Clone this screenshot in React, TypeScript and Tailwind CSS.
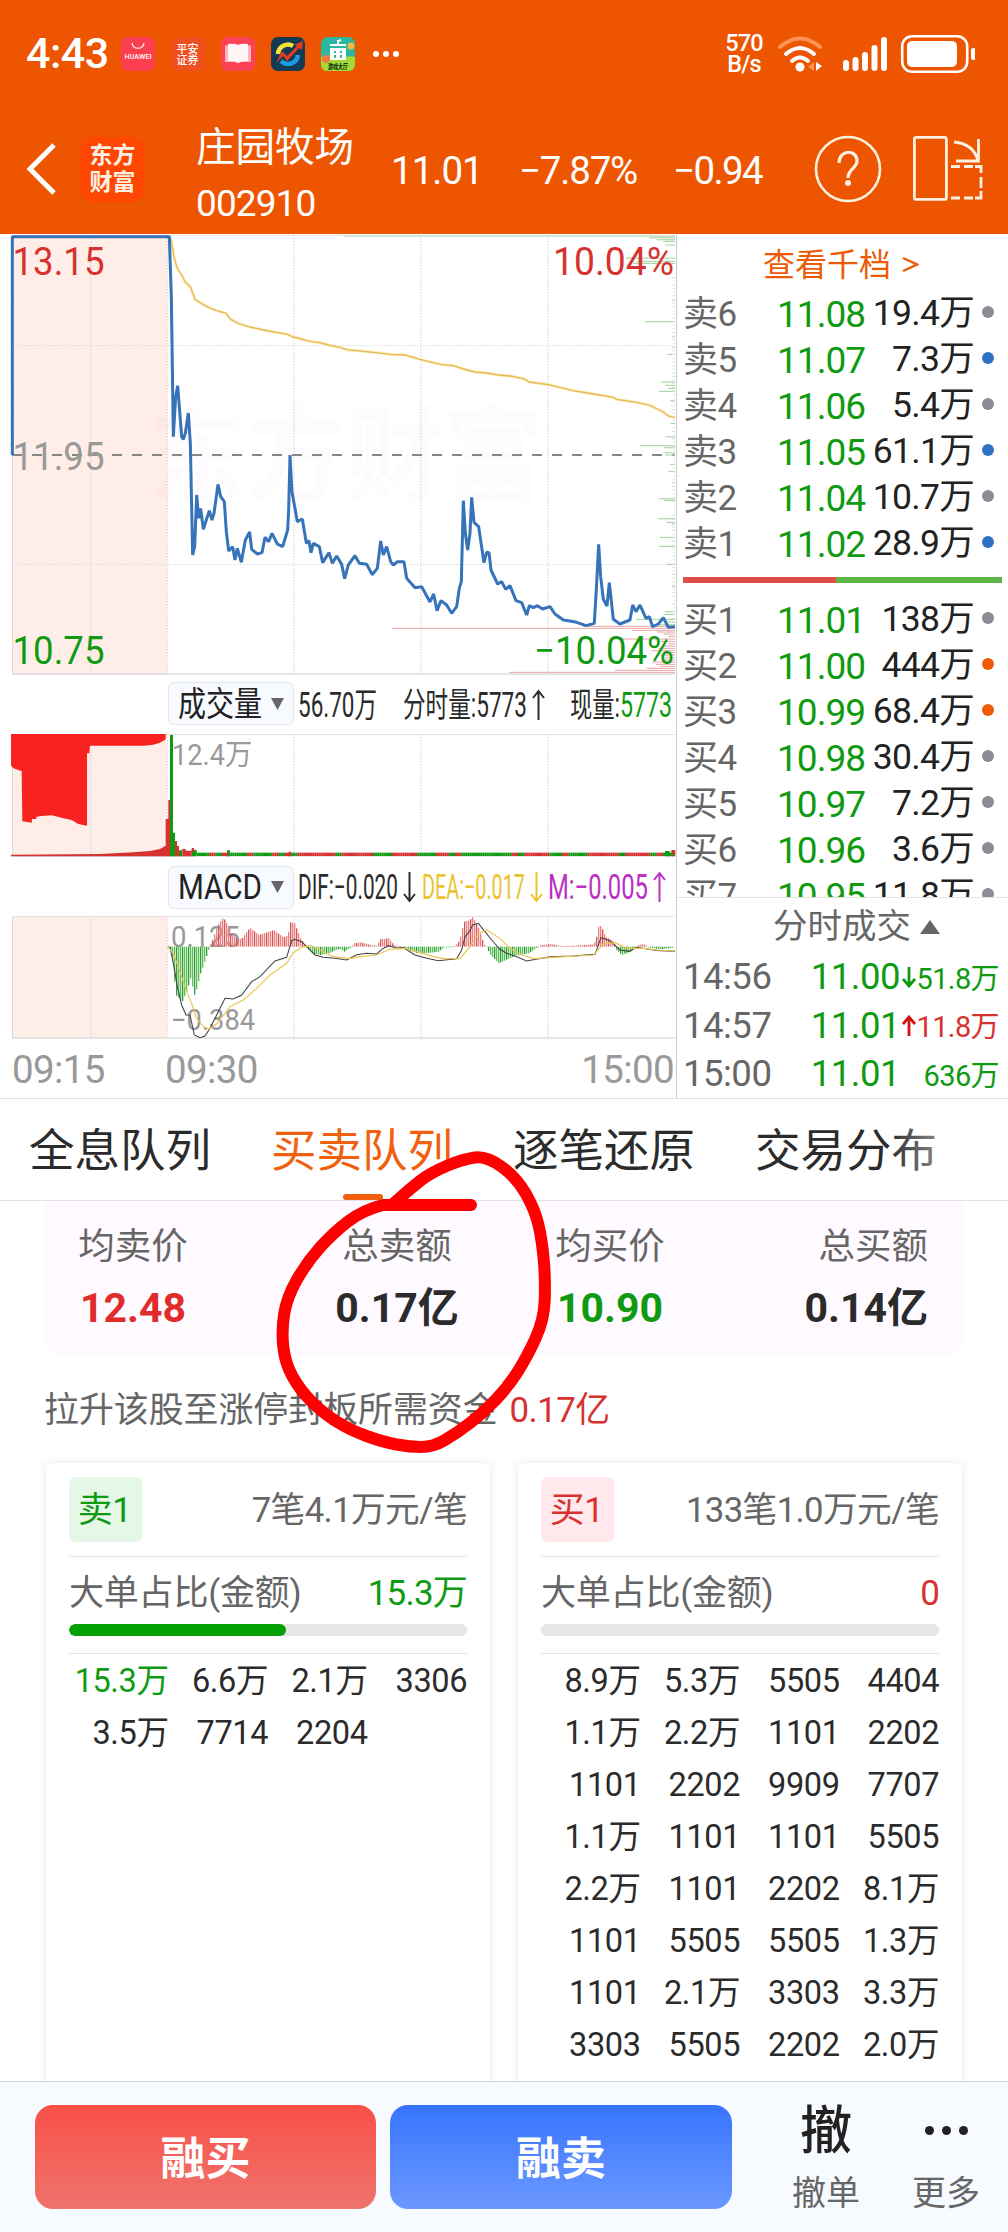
import React from "react";

const GREEN = "#0f9a12";
const RED = "#d7322f";

type Pt = [number, number];
const line = (p: Pt[]) => p.map(([x, y]) => `${x},${y}`).join(" ");
const shift = (p: Pt[]): Pt[] => p.map(([x, y]) => [x + 1020, y]);

/* Chart series are stored at triple resolution and drawn inside a 1/3 scale group. */
const price: Pt[] = [
  [37, 675], [37, 20], [508, 20], [514, 200], [520, 620], [527, 500], [533, 467], [545, 620], [550, 628], [556, 610], [565, 549],
  [571, 640], [578, 975], [584, 950], [590, 795], [596, 865], [602, 835], [610, 898], [628, 842], [636, 870], [642, 850], [654, 763],
  [662, 800], [673, 815], [679, 905], [686, 963], [698, 950], [705, 990], [712, 955], [724, 997], [736, 930], [749, 906], [755, 958],
  [772, 972], [786, 968], [795, 922], [806, 935], [816, 910], [832, 942], [848, 950], [863, 900], [866, 840], [870, 675], [876, 785],
  [892, 875], [907, 867], [919, 940], [927, 932], [933, 968], [940, 940], [958, 950], [968, 998], [987, 968], [997, 1000], [1010, 978],
  [1025, 1003],
  ...shift([
    [14, 1046], [25, 1005], [45, 977], [58, 1000], [80, 1003], [97, 1034], [112, 1015], [122, 933], [130, 975], [140, 950], [152, 995],
    [160, 1005], [172, 995], [192, 995], [200, 1045], [225, 1073], [245, 1070], [270, 1116], [281, 1092], [291, 1142], [303, 1112],
    [320, 1125], [335, 1150], [350, 1130], [358, 1075], [364, 1055], [370, 812], [376, 910], [383, 960], [390, 910], [395, 802],
    [402, 877], [416, 890], [432, 998], [440, 967], [447, 968], [453, 1020], [473, 1062], [485, 1055], [497, 1078], [510, 1067],
    [528, 1112], [545, 1118], [560, 1155], [568, 1127], [580, 1133], [592, 1127], [608, 1137], [630, 1130], [645, 1152], [670, 1170],
    [690, 1173], [710, 1177], [738, 1187], [763, 1180], [770, 1060], [776, 943], [782, 1040], [790, 1108], [801, 1128], [808, 1058],
    [820, 1168], [840, 1182], [870, 1170], [878, 1125], [888, 1145], [900, 1125], [918, 1165], [928, 1160], [938, 1190], [955, 1182],
    [970, 1163], [985, 1192], [1005, 1190],
  ]),
];

const average: Pt[] = [
  [510, 20], [516, 45], [523, 85], [532, 115], [545, 135], [555, 155], [572, 172], [585, 208], [600, 218], [625, 232], [650, 242],
  [678, 250], [692, 268], [715, 280], [745, 290], [790, 300], [863, 313], [880, 321], [935, 335], [960, 338], [985, 345], [1020, 352],
  ...shift([
    [20, 359], [100, 367], [150, 373], [195, 375], [240, 388], [300, 403], [340, 407], [370, 417], [405, 426], [440, 429], [475, 435],
    [510, 438], [550, 446], [568, 456], [625, 464], [700, 482], [760, 492], [820, 502], [830, 508], [890, 517], [930, 526], [970, 546],
    [985, 558], [1005, 563],
  ]),
];

const asks: Pt[] = [
  [23, 927], [29, 950], [34, 970], [45, 975], [84, 858], [94, 890], [100, 880], [210, 995], [275, 916], [320, 995], [352, 995],
  [373, 982], [456, 963], [466, 975], [475, 985], [484, 957], [512, 990], [580, 992], [620, 977], [647, 900], [653, 973], [668, 973],
  [675, 975], [703, 990], [724, 985], [757, 995], [806, 958], [811, 972], [866, 955], [877, 980], [882, 995], [922, 960], [949, 957],
  [1003, 980], [1070, 996], [1145, 975], [1153, 970], [1168, 888], [1176, 975], [1184, 960],
];
const bids: Pt[] = [
  [1195, 155], [1189, 730], [1201, 875], [1206, 950], [1212, 970], [1219, 985], [1227, 845], [1234, 960], [1241, 985], [1248, 970],
  [1255, 955], [1262, 935], [1268, 970], [1275, 960], [1283, 975], [1290, 965], [1296, 935], [1303, 947], [1309, 960], [1315, 920],
  [1321, 825], [1327, 507],
];

const hist: Pt[] = [
  [508, 835], [514, 855], [526, 975], [545, 995], [560, 960], [570, 925], [583, 978], [600, 910], [620, 852], [627, 830], [634, 815],
  [650, 770], [665, 745], [675, 750], [690, 790], [712, 808], [725, 805], [748, 773], [775, 795], [820, 780], [850, 803], [862, 795],
  [870, 757], [882, 760], [900, 805], [918, 830], [925, 840], [940, 852], [960, 855], [985, 850], [1010, 838],
  ...shift([
    [0, 838], [12, 845], [34, 830], [40, 820], [60, 817], [95, 826], [110, 828], [118, 808], [145, 805], [160, 825], [180, 829],
    [205, 840], [230, 850], [270, 848], [295, 845], [310, 832], [340, 829], [352, 820], [362, 795], [370, 755], [385, 752], [397, 741],
    [415, 775], [430, 822], [438, 832], [450, 855], [475, 880], [500, 868], [530, 855], [565, 850], [590, 832], [600, 826], [630, 822],
    [660, 828], [700, 827], [760, 823], [768, 800], [775, 765], [783, 770], [795, 800], [820, 815], [826, 840], [845, 855], [870, 845],
    [885, 832], [895, 825], [905, 822], [920, 828], [930, 833], [960, 838], [1005, 832],
  ]),
];

const dif: Pt[] = [
  [503, 830], [510, 832], [520, 880], [532, 950], [545, 1005], [558, 1035], [570, 1035], [583, 1095], [600, 1103], [615, 1098],
  [630, 1075], [650, 1035], [675, 985], [700, 987], [725, 975], [755, 935], [780, 920], [825, 873], [860, 862], [875, 812], [885, 808],
  [905, 815], [925, 835], [945, 855], [970, 862], [1005, 865],
  ...shift([
    [20, 870], [50, 854], [80, 850], [110, 852], [125, 838], [145, 827], [170, 834], [190, 833], [225, 855], [260, 865], [295, 872],
    [350, 866], [365, 840], [375, 800], [388, 785], [398, 765], [415, 760], [435, 785], [455, 810], [480, 838], [500, 850], [530, 860],
    [560, 873], [630, 860], [700, 858], [765, 853], [783, 803], [810, 812], [840, 840], [868, 844], [890, 832], [940, 840], [960, 842],
    [1005, 844],
  ]),
];
const dea: Pt[] = [
  [503, 830], [520, 850], [540, 905], [560, 965], [575, 1000], [590, 1045], [610, 1070], [625, 1078], [650, 1062], [690, 1010],
  [730, 990], [770, 955], [810, 915], [860, 880], [880, 848], [905, 832], [930, 826], [960, 840], [1000, 860],
  ...shift([
    [30, 866], [60, 860], [110, 855], [150, 838], [195, 835], [240, 848], [280, 860], [310, 866], [360, 866], [390, 830], [415, 790],
    [440, 780], [480, 805], [510, 835], [540, 853], [580, 866], [640, 862], [760, 855], [790, 822], [825, 818], [860, 835], [910, 835],
    [950, 840], [1005, 843],
  ]),
];

const inkPoints: Pt[] = [
  [383, 1205], [363, 1210], [333, 1233], [307, 1262], [287, 1297], [281.5, 1330], [285, 1363], [300, 1390], [323, 1413], [350, 1430],
  [383, 1442], [410, 1447], [433, 1447], [457, 1433], [483, 1413], [508, 1387], [527, 1357], [544, 1320], [545.5, 1280], [542, 1240],
  [535, 1210], [517, 1178], [487, 1156], [463, 1159], [430, 1173], [410, 1189], [393, 1204],
];

function smooth(p: Pt[]) {
  let d = "";
  for (let i = 1; i < p.length - 1; i++) {
    const [x, y] = p[i];
    const [nx, ny] = p[i + 1];
    d += `Q${x} ${y} ${(x + nx) / 2} ${(y + ny) / 2}`;
  }
  const [lx, ly] = p[p.length - 1];
  return `M471 1205L${p[0][0]} ${p[0][1]}${d}L${lx} ${ly}`;
}

function valueAt(p: Pt[], x: number) {
  for (let i = 1; i < p.length; i++) {
    if (x <= p[i][0]) {
      const [x0, y0] = p[i - 1];
      const [x1, y1] = p[i];
      return y0 + ((y1 - y0) * (x - x0)) / (x1 - x0);
    }
  }
  return p[p.length - 1][1];
}

const histXs = Array.from({ length: 252 }, (_, i) => 510 + i * 6);
const volXs = Array.from({ length: 227 }, (_, i) => 590 + i * 6.3);
const noise = (i: number) => Math.abs(Math.sin(i * 12.9898) * 43758.5453) % 1;

function Grid({ top, bottom }: { top: number; bottom: number }) {
  return (
    <g>
      <rect x="12" y={top} width="155" height={bottom - top} fill="#ffeee7" />
      {[91, 167.5, 294, 421, 548].map((x) => (
        <line key={x} x1={x} x2={x} y1={top} y2={bottom} stroke="#dcd9dc" strokeWidth="1.3" strokeDasharray="1.5 1.5" />
      ))}
      <line x1="12.5" x2="12.5" y1={top} y2={bottom} stroke="#dadada" />
      <line x1="12" x2="675" y1={top + 0.5} y2={top + 0.5} stroke="#e2e2e2" />
      <line x1="12" x2="675" y1={bottom} y2={bottom} stroke="#dcdcdc" strokeWidth="1.5" />
    </g>
  );
}

function Label(p: { x: number; y: number; w: number; size: number; fill: string; children: string }) {
  return (
    <text x={p.x} y={p.y} fontSize={p.size} fill={p.fill} textLength={p.w} lengthAdjust="spacingAndGlyphs">
      {p.children}
    </text>
  );
}

function PriceChart() {
  return (
    <svg className="block" width="676" height="442" viewBox="0 235 676 442">
      <Grid top={235} bottom={674} />
      <g fill="#b450c8" fillOpacity="0.025" fontWeight="700" fontSize="104">
        <text x="148" y="494" textLength="394" lengthAdjust="spacingAndGlyphs">东方财富</text>
      </g>
      <g stroke="#dcdcdc" strokeDasharray="1.5 1.5">
        <line x1="12" x2="675" y1="345.5" y2="345.5" />
        <line x1="12" x2="675" y1="564.5" y2="564.5" />
      </g>
      <line x1="12" x2="675" y1="455" y2="455" stroke="#858585" strokeWidth="1.8" strokeDasharray="10 10" />
      <rect x="344" y="235" width="331" height="2" fill="#d3e4cf" />
      <g transform="translate(0 230) scale(0.33333)">
        {asks.map(([y, x]) => (
          <rect key={y} x={x + 1020} y={y - 1.5} width={1005 - x} height="3.4" fill="#a9d6a9" />
        ))}
        {Array.from({ length: 95 }, (_, i) => (
          <rect key={i} x={2025 - 3 - noise(i) * 8} y={130 + i * 11} width={3 + noise(i) * 8} height="3" fill="#cde6cd" />
        ))}
        {bids.map(([y, x]) => (
          <rect key={y} x={x + 1020} y={y - 1.5} width={1005 - x} height="3.2" fill="#e9abab" />
        ))}
        <polyline points={line(average)} fill="none" stroke="#fbeeb9" strokeWidth="9" />
        <polyline points={line(average)} fill="none" stroke="#e8b95a" strokeWidth="4" />
        <polyline points={line(price)} fill="none" stroke="#3673b8" strokeWidth="9" strokeLinejoin="bevel" />
      </g>
      <Label x={12.5} y={275} w={92} size={39} fill={RED}>13.15</Label>
      <Label x={12.5} y={470} w={92} size={39} fill="#999999">11.95</Label>
      <Label x={12.5} y={664} w={92} size={39} fill={GREEN}>10.75</Label>
      <Label x={553} y={275} w={121} size={39} fill={RED}>10.04%</Label>
      <Label x={534} y={664} w={140} size={39} fill={GREEN}>−10.04%</Label>
    </svg>
  );
}

function VolumeChart() {
  return (
    <svg className="block" width="676" height="126" viewBox="0 733 676 126">
      <Grid top={734} bottom={856} />
      <g transform="translate(0 670) scale(0.33333)">
        <path
          fill="#f82221"
          d="M33 192H497V208L490 212L480 218L460 224L430 227H270L268 250H261V467L235 462L215 450L190 445L155 436L125 438L110 440L108 447H96L95 458L67 454L65 303L55 300L40 295L33 287Z"
        />
        <path fill={RED} d="M33 559V554L300 552L400 547L450 543L480 537L497 527V447H505V390H510V559Z" />
        <rect x="510" y="195" width="9" height="364" fill={GREEN} />
        <path fill={GREEN} d="M519 559V488H525V559ZM537 559V541H547V559ZM575 559V540H590V559ZM681 559V541H690V559ZM1995 559V543H2009V559Z" />
        <path fill={RED} d="M525 559V513H531V528H537V559ZM547 559V537H557V542H575V534H582V545H575V559ZM866 559V545H874V559ZM2014 559V540H2026V559Z" />
        {volXs.map((x, i) => (
          <rect key={i} x={x} y="548" width="6.5" height="10" fill={noise(Math.floor(i / 3) + 4) > 0.52 ? RED : GREEN} />
        ))}
      </g>
      <Label x={172} y={765} w={80} size={29} fill="#999999">12.4万</Label>
    </svg>
  );
}

function MacdChart() {
  return (
    <svg className="block" width="676" height="125" viewBox="0 915 676 125">
      <Grid top={916} bottom={1038} />
      <Label x={171} y={947} w={69} size={29} fill="#999999">0.125</Label>
      <Label x={171} y={1030} w={84} size={29} fill="#999999">−0.384</Label>
      <g transform="translate(0 670) scale(0.33333)">
        {histXs.map((x, i) => {
          const y = valueAt(hist, x);
          const up = y < 830;
          return (
            <rect
              key={x}
              x={x}
              y={up ? y : 830}
              width="4"
              height={Math.max(2, Math.abs(y - 830))}
              fill={up ? (i % 3 ? "#ee8181" : "#cf5858") : i % 3 ? "#5cbf5c" : "#2f9e33"}
            />
          );
        })}
        <polyline points={line(dif)} fill="none" stroke="#444" strokeWidth="3.2" />
        <polyline points={line(dea)} fill="none" stroke="#ecc54e" strokeWidth="3.4" />
      </g>
    </svg>
  );
}

function Squeezed({ w, color, children }: { w: number; color?: string; children: string }) {
  return (
    <svg className="block overflow-visible" width={w} height="40" viewBox={`0 0 ${w} 40`}>
      <text x="0" y="32" fontSize="34.5" fill={color ?? "#2b2b2b"} textLength={w} lengthAdjust="spacingAndGlyphs">{children}</text>
    </svg>
  );
}

function Pill({ children }: { children: string }) {
  return (
    <div className="ml-[168px] flex h-[43px] w-[126px] shrink-0 items-center justify-between rounded-md border border-[#e6e7ee] bg-[#f7faff] pr-[9px] pl-[9px]">
      <Squeezed w={84} color="#222222">{children}</Squeezed>
      <svg width="13" height="12" viewBox="0 0 13 12"><path d="M0 0H13L6.5 12Z" fill="#666" /></svg>
    </div>
  );
}

function ThinArrow({ up, color }: { up?: boolean; color: string }) {
  return (
    <svg className="block" width="13" height="32" viewBox="0 0 13 32" fill="none" stroke={color} strokeWidth="2">
      <path d={up ? "M6.5 31V2M1 9L6.5 2L12 9" : "M6.5 1V30M1 23L6.5 30L12 23"} />
    </svg>
  );
}

const GRAY_DOT = "bg-[#8c8c94]";
const BLUE_DOT = "bg-[#2f72c4]";
const ORANGE_DOT = "bg-[#ee5a05]";
const sellRows = [
  ["卖6", "11.08", "19.4万", GRAY_DOT], ["卖5", "11.07", "7.3万", BLUE_DOT], ["卖4", "11.06", "5.4万", GRAY_DOT],
  ["卖3", "11.05", "61.1万", BLUE_DOT], ["卖2", "11.04", "10.7万", GRAY_DOT], ["卖1", "11.02", "28.9万", BLUE_DOT],
];
const buyRows = [
  ["买1", "11.01", "138万", GRAY_DOT], ["买2", "11.00", "444万", ORANGE_DOT], ["买3", "10.99", "68.4万", ORANGE_DOT],
  ["买4", "10.98", "30.4万", GRAY_DOT], ["买5", "10.97", "7.2万", GRAY_DOT], ["买6", "10.96", "3.6万", GRAY_DOT],
  ["买7", "10.95", "11.8万", GRAY_DOT],
];

function BookRow({ row }: { row: string[] }) {
  return (
    <div className="flex h-[46px] shrink-0 items-center pt-[2px] text-[37px] leading-none tracking-[-1px]">
      <span className="w-[70px] text-[35px] tracking-[-0.5px] text-[#666]">{row[0]}</span>
      <span className="w-[112px] text-right text-[#0f9a12]">{row[1]}</span>
      <span className="w-[109px] text-right text-[35.5px] tracking-[-0.7px] whitespace-nowrap text-[#222]">{row[2]}</span>
      <span className={`ml-[8px] size-3 -translate-y-[2px] rounded-full ${row[3]}`} />
    </div>
  );
}

function TradeRow({ time, p, vol, dir }: { time: string; p: string; vol: string; dir?: "up" | "down" }) {
  return (
    <div className="flex h-[48.5px] items-center text-[36.5px] leading-none tracking-[-0.5px]">
      <span className="w-[88px] text-[#666]">{time}</span>
      <span className="w-[129px] text-right text-[#0f9a12]">{p}</span>
      <span className="flex w-[16px] justify-end">
        {dir && (
          <svg width="14" height="22" viewBox="0 0 14 22" fill="none" stroke={dir === "up" ? "#d80f10" : GREEN} strokeWidth="2.8">
            <path d={dir === "up" ? "M7 21V2M1 9L7 2L13 9" : "M7 1V20M1 13L7 20L13 13"} />
          </svg>
        )}
      </span>
      <span className={`w-[83px] pt-1 text-right text-[29px] tracking-[-0.6px] whitespace-nowrap ${dir === "up" ? "text-[#d7322f]" : "text-[#0f9a12]"}`}>
        {vol}
      </span>
    </div>
  );
}

function StatusBar() {
  return (
    <div className="flex h-[104px] items-center pt-[3px] pl-[26px] text-white">
      <span className="w-[95px] text-[43px] leading-none font-medium tracking-[-0.5px]">4:43</span>
      <div className="flex gap-[16px]">
        <svg width="34" height="34" viewBox="0 0 34 34">
          <rect width="34" height="34" rx="7" fill="#fb3f50" />
          <path d="M11 6C12 13 22 13 23 6" fill="none" stroke="#fff" strokeWidth="1.2" />
          <text x="3.5" y="22" fontSize="7" fill="#fff" textLength="27" fontWeight="500">HUAWEI</text>
        </svg>
        <svg width="34" height="34" viewBox="0 0 34 34">
          <rect width="34" height="34" rx="7" fill="#f0501f" />
          <text x="5.5" y="16" fontSize="11" fill="#fff" fontWeight="500">平安</text>
          <text x="5.5" y="26.5" fontSize="11" fill="#fff" fontWeight="500">证券</text>
        </svg>
        <svg width="34" height="34" viewBox="0 0 34 34">
          <rect width="34" height="34" rx="7" fill="#fb4257" />
          <path d="M4 9L7 8Q13 6 17 8Q21 6 27 8L30 9V25L27 25Q20 24 17 26Q14 24 7 25L4 25Z" fill="#ffb3b9" />
          <path d="M7 7Q13 6 17 8Q21 6 27 7V24Q20 24 17 26Q14 24 7 24Z" fill="#fff4f6" />
        </svg>
        <svg width="34" height="34" viewBox="0 0 34 34">
          <rect width="34" height="34" rx="7" fill="#133a55" />
          <path d="M7 17A10 10 0 0 1 22 9" fill="none" stroke="#f2e33a" strokeWidth="4.5" />
          <path d="M27 18A10 10 0 0 1 10 24" fill="none" stroke="#1e9be2" strokeWidth="4.5" />
          <path d="M5 26L11 14L16 19L26 9L23 8L32 4L31 13L28 11L16 24L12 19Z" fill="#e23b22" />
        </svg>
        <svg width="34" height="34" viewBox="0 0 34 34">
          <rect width="34" height="34" rx="7" fill="#2cb8a0" />
          <path d="M0 20Q8 16 17 22Q26 18 34 20V27Q34 34 27 34H7Q0 34 0 27Z" fill="#a3d93a" />
          <circle cx="30" cy="9" r="3.5" fill="#f1b73c" /><circle cx="5" cy="22" r="4" fill="#ef7a45" />
          <path d="M9 8H25M17 8V3M17 4L20 3" stroke="#fff" strokeWidth="2" fill="none" />
          <path d="M9 11H25V23H9ZM13 14V16H15V14ZM19 14V16H21V14ZM13 18V21H15V18ZM19 18V21H21V18Z" fill="#fff" fillRule="evenodd" />
          <text x="7" y="32" fontSize="6.5" fill="#143b10" fontWeight="900" textLength="20" lengthAdjust="spacingAndGlyphs">游戏大厅</text>
        </svg>
      </div>
      <div className="ml-[18px] flex gap-[4px]">
        <i className="size-[6px] rounded-full bg-white" /><i className="size-[6px] rounded-full bg-white" /><i className="size-[6px] rounded-full bg-white" />
      </div>
      <div className="ml-[323px] w-[44px] text-center text-[23.5px] leading-[21px] font-medium tracking-[-0.8px]">
        570<br />B/s
      </div>
      <svg className="ml-[9px]" width="200" height="42" viewBox="776 32 200 42">
        <g fill="none" stroke="#fff" strokeWidth="4" strokeLinecap="round">
          <path d="M781 46Q801 29 821 46" stroke="#ff9255" />
          <path d="M787 53Q801 41 815 53" /><path d="M793 60Q801 53 809 60" />
        </g>
        <circle cx="801" cy="66" r="4.5" fill="#fff" />
        <path d="M815 61V70L809 66Z" fill="#ff9255" /><path d="M817 61V70L823 65Z" fill="#fff" />
        <g fill="#fff">
          <rect x="844" y="59" width="6" height="11" rx="3" /><rect x="853.5" y="56" width="6" height="14" rx="3" />
          <rect x="863" y="51" width="6" height="19" rx="3" /><rect x="872.5" y="44" width="6" height="26" rx="3" />
          <rect x="882" y="36" width="6" height="34" rx="3" /><rect x="908" y="40" width="50" height="26" rx="5" />
          <rect x="972" y="47" width="4.5" height="12" rx="2.2" />
        </g>
        <rect x="903.2" y="35.2" width="65" height="35.6" rx="10" fill="none" stroke="#fff" strokeWidth="2.6" />
      </svg>
    </div>
  );
}

function TitleBar() {
  return (
    <div className="flex h-[130px] items-center pl-[26px] text-white">
      <svg width="30" height="54" viewBox="0 0 30 54" fill="none" stroke="#fff" strokeWidth="5">
        <path d="M28 3L4 27L28 51" />
      </svg>
      <div className="ml-[24px] flex size-[65px] flex-col items-center justify-center rounded-[13px] bg-[#fd4703] text-[23px] leading-[27px] font-bold text-[#fff0e4]">
        <span>东方</span>
        <span>财富</span>
      </div>
      <div className="ml-[51px] w-[195px] pt-[13px]">
        <div className="text-[39.5px] leading-[56px] whitespace-nowrap">庄园牧场</div>
        <div className="text-[37px] leading-[56px] tracking-[-0.9px]">002910</div>
      </div>
      <span className="w-[128px] pt-[3px] text-[38.5px] tracking-[-1px]">11.01</span>
      <span className="w-[154px] pt-[3px] text-[38.5px] tracking-[-1.2px] whitespace-nowrap">−7.87%</span>
      <span className="w-[141px] pt-[3px] text-[38.5px] tracking-[-1.6px] whitespace-nowrap">−0.94</span>
      <div className="flex items-center gap-[31px]">
        <svg width="68" height="68" viewBox="815 136 68 68" fill="none" stroke="#fff0e2" strokeWidth="2.6">
          <circle cx="849" cy="170" r="32" />
          <path d="M840 164C840 150 858 150 858 162C858 169 849 170 849 179" strokeWidth="3.2" />
          <circle cx="849" cy="184" r="3" fill="#fff0e2" stroke="none" />
        </svg>
        <svg width="71" height="68" viewBox="914 136 71 68" fill="none" stroke="#fff0e2" strokeWidth="2.8">
          <rect x="915.4" y="138.4" width="32" height="62" rx="2" />
          <path d="M955 143Q975 145 979 162M979.5 140V162H957" />
          <path d="M952 167.5H961M965 167.5H974M976 167.5H982V174M982 178V189M982 192V199H976M974 199H965M961 199H952" />
        </svg>
      </div>
    </div>
  );
}

const sellQueue = ["15.3万", "6.6万", "2.1万", "3306", "3.5万", "7714", "2204"];
const buyQueue = [
  "8.9万", "5.3万", "5505", "4404", "1.1万", "2.2万", "1101", "2202", "1101", "2202", "9909", "7707", "1.1万", "1101", "1101", "5505",
  "2.2万", "1101", "2202", "8.1万", "1101", "5505", "5505", "1.3万", "1101", "2.1万", "3303", "3.3万", "3303", "5505", "2202", "2.0万",
];

function QueueCard(p: { side: "sell" | "buy"; tag: string; summary: string; big: string; ratio: number; items: string[] }) {
  const sell = p.side === "sell";
  const tint = sell ? "text-[#0f9a12]" : "text-[#d7322f]";
  return (
    <div className="h-[640px] w-[444px] rounded-t-lg bg-white px-[23px] pt-[14px] text-[#666] shadow-[0_0_8px_rgba(90,60,100,0.12)]">
      <div className="flex h-[65px] items-center justify-between">
        <span className={`flex h-[65px] w-[73px] items-center justify-center rounded-md pt-[2px] pr-[2px] text-[35px] leading-none tracking-[-0.5px] ${sell ? "bg-[#e5f7e6]" : "bg-[#ffe9ec]"} ${tint}`}>
          {p.tag}
        </span>
        <span className="pt-[2px] text-[34.7px] tracking-[-0.6px]">{p.summary}</span>
      </div>
      <div className="mt-[14px] h-px bg-[#e4e4e4]" />
      <div className="flex h-[67px] items-center justify-between pt-[8px] text-[35px] tracking-[-0.2px]">
        <span>大单占比(金额)</span>
        <span className={`text-[35px] tracking-[-0.8px] ${tint}`}>{p.big}</span>
      </div>
      <div className="h-[12px] overflow-hidden rounded-full bg-[#e6e6e6]">
        <div className="h-full rounded-full bg-[#04a004]" style={{ width: `${p.ratio}%` }} />
      </div>
      <div className="mt-[17px] h-px bg-[#e4e4e4]" />
      <div className="grid grid-cols-4 pt-[1px] text-right text-[32.5px] leading-[52px] tracking-[-0.4px] text-[#2b2b2b]">
        {p.items.map((v, i) => (
          <span key={i} className={sell && i === 0 ? "text-[#0f9a12]" : ""}>{v}</span>
        ))}
      </div>
    </div>
  );
}

function Stat({ label, value, cls, color }: { label: string; value: string; cls: string; color: string }) {
  return (
    <div className={`flex flex-col ${cls}`}>
      <span className="text-[36.5px] leading-[50px] text-[#666]">{label}</span>
      <span className={`mt-[13px] text-[41px] leading-[46px] font-bold whitespace-nowrap ${color}`}>{value}</span>
    </div>
  );
}

export default function App() {
  return (
    <div className="relative flex h-[2232px] w-[1008px] flex-col overflow-hidden bg-white font-[Roboto,'Noto_Sans_CJK_SC',sans-serif]">
      <header className="h-[234px] shrink-0 bg-[#ed5500]">
        <StatusBar />
        <TitleBar />
      </header>

      <section className="flex h-[865px] shrink-0 border-b border-[#e2e2e2] pt-px">
        <div className="w-[677px] border-r border-[#c9c9c9]">
          <PriceChart />
          <div className="flex h-[56px] items-center pb-[3px]">
            <Pill>成交量</Pill>
            <div className="ml-[4px] flex w-[374px] items-center justify-between pt-[2px]">
              <Squeezed w={79}>56.70万</Squeezed>
              <div className="flex items-center gap-[5px]">
                <Squeezed w={124}>分时量:5773</Squeezed>
                <ThinArrow up color="#2b2b2b" />
              </div>
              <div className="flex">
                <Squeezed w={50}>现量:</Squeezed>
                <Squeezed w={52} color={GREEN}>5773</Squeezed>
              </div>
            </div>
          </div>
          <VolumeChart />
          <div className="flex h-[56px] items-center">
            <Pill>MACD</Pill>
            <div className="ml-[4px] flex items-center">
              <Squeezed w={100}>DIF:−0.020</Squeezed>
              <span className="ml-[5px]"><ThinArrow color="#2b2b2b" /></span>
              <span className="ml-[6px]"><Squeezed w={103} color="#ebc22f">DEA:−0.017</Squeezed></span>
              <span className="ml-[5px]"><ThinArrow color="#ebc22f" /></span>
              <span className="ml-[5px]"><Squeezed w={100} color="#bb2fc4">M:−0.005</Squeezed></span>
              <span className="ml-[5px]"><ThinArrow up color="#bb2fc4" /></span>
            </div>
          </div>
          <MacdChart />
          <div className="flex h-[58px] items-center pt-[3px] pl-[12px] text-[38.5px] leading-none tracking-[-0.6px] text-[#999]">
            <span className="w-[153px]">09:15</span>
            <span>09:30</span>
            <span className="mr-[2px] ml-auto">15:00</span>
          </div>
        </div>

        <div className="flex w-[331px] flex-col">
          <div className="flex h-[663px] shrink-0 flex-col overflow-hidden border-b border-[#e2e2e2] pl-[6px]">
            <div className="flex h-[55px] shrink-0 items-center justify-center pt-[4px] pr-[9px] text-[32px] leading-none text-[#ee5a05]">
              <span>查看千档</span>
              <svg className="ml-[11px]" width="17" height="17" viewBox="0 0 17 17" fill="none" stroke="#ee5a05" strokeWidth="2.4"><path d="M1 2L15 8.5L1 15" /></svg>
            </div>
            {sellRows.map((r) => <BookRow key={r[0]} row={r} />)}
            <div className="mt-[11px] mb-[13px] flex h-[6px] w-[319px] shrink-0 bg-gradient-to-r from-[#de4d48] from-48% to-[#5cb544] to-48%" />
            {buyRows.map((r) => <BookRow key={r[0]} row={r} />)}
          </div>
          <div className="flex h-[55px] shrink-0 items-center justify-center gap-[9px] pt-[2px] pl-[28px] text-[34.5px] leading-none text-[#666]">
            分时成交
            <svg width="20" height="14" viewBox="0 0 20 14"><path d="M0 14L10 0L20 14Z" fill="#666" /></svg>
          </div>
          <div className="pl-[6px]">
            <TradeRow time="14:56" p="11.00" vol="51.8万" dir="down" />
            <TradeRow time="14:57" p="11.01" vol="11.8万" dir="up" />
            <TradeRow time="15:00" p="11.01" vol="636万" />
          </div>
        </div>
      </section>

      <nav className="relative flex h-[102px] shrink-0 gap-[60px] overflow-hidden border-b border-[#e4e4e4] pl-[29px] text-[45.5px] leading-[106px] whitespace-nowrap text-[#2b2b2b]">
        <span>全息队列</span>
        <span className="relative h-[101px] text-[#f0600f]">
          买卖队列
          <i className="absolute bottom-0 left-[72px] h-[6px] w-[40px] rounded-full bg-[#f0600f]" />
        </span>
        <span>逐笔还原</span>
        <span>交易分布</span>
        <span>逐</span>
        <i className="absolute top-0 right-0 h-full w-[120px] bg-gradient-to-r from-white/0 to-white to-95%" />
      </nav>

      <main className="min-h-0 flex-1 overflow-hidden pl-[44px]">
        <div className="flex h-[154px] w-[920px] rounded-b-2xl bg-[#fefaff] pt-[21px]">
          <Stat label="均卖价" value="12.48" cls="w-[178px] items-center" color="text-[#e02d2c]" />
          <Stat label="总卖额" value="0.17亿" cls="ml-[86px] w-[178px] items-center" color="text-[#2b2b2b]" />
          <Stat label="均买价" value="10.90" cls="ml-[35px] w-[178px] items-center" color="text-[#0f9a12]" />
          <Stat label="总买额" value="0.14亿" cls="ml-auto items-end pr-[36px]" color="text-[#2b2b2b]" />
        </div>
        <div className="mt-[29px] flex h-[50px] items-center pt-[4px] text-[34.9px] whitespace-nowrap text-[#666]">
          拉升该股至涨停封板所需资金<span className="ml-[12px] tracking-[-0.6px] text-[#d7322f]">0.17亿</span>
        </div>
        <div className="mt-[29px] flex gap-[28px] pl-[2px]">
          <QueueCard side="sell" tag="卖1" summary="7笔4.1万元/笔" big="15.3万" ratio={54.5} items={sellQueue} />
          <QueueCard side="buy" tag="买1" summary="133笔1.0万元/笔" big="0" ratio={0} items={buyQueue} />
        </div>
      </main>

      <footer className="relative flex h-[151px] shrink-0 border-t border-[#d3d6dc] bg-[#f7faff] pt-[23px] pl-[35px]">
        <button className="h-[104px] w-[341px] rounded-[18px] bg-gradient-to-b from-[#f94f47] to-[#ee736d] pt-[5px] text-[45px] font-bold text-white">融买</button>
        <button className="ml-[14px] h-[104px] w-[342px] rounded-[18px] bg-gradient-to-b from-[#3674fd] to-[#6c98ff] pt-[5px] text-[45px] font-bold text-white">融卖</button>
        <div className="ml-[54px] flex w-[80px] flex-col items-center">
          <span className="text-[52px] leading-[54px] font-medium text-[#222]">撤</span>
          <span className="mt-[11px] text-[34px] leading-[46px] text-[#666]">撤单</span>
        </div>
        <div className="ml-[40px] flex w-[80px] flex-col items-center">
          <span className="flex h-[50px] items-center gap-[8px]">
            <i className="size-[9px] rounded-full bg-[#222]" /><i className="size-[9px] rounded-full bg-[#222]" /><i className="size-[9px] rounded-full bg-[#222]" />
          </span>
          <span className="mt-[15px] text-[34px] leading-[46px] text-[#666]">更多</span>
        </div>
      </footer>

      <svg className="pointer-events-none absolute top-[1140px] left-[260px]" width="310" height="330" viewBox="260 1140 310 330" fill="none">
        <path d={smooth(inkPoints)} stroke="#fe0000" strokeWidth="12" strokeLinecap="round" strokeLinejoin="round" />
      </svg>
    </div>
  );
}
